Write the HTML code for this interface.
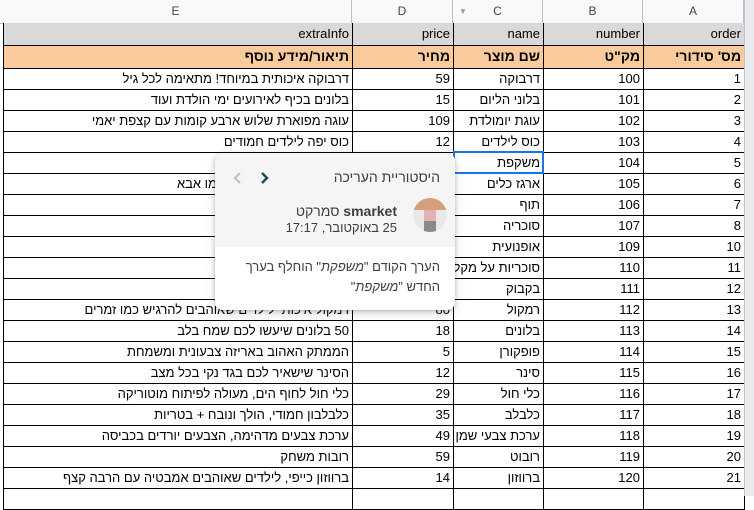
<!DOCTYPE html>
<html><head><meta charset="utf-8"><style>
*{margin:0;padding:0;box-sizing:border-box}
body{width:754px;height:496px;overflow:hidden;background:#fff;font-family:"Liberation Sans",Arial,sans-serif;font-size:13px;color:#000;position:relative}
.hdr{position:absolute;top:0;left:0;width:754px;height:24px;background:#f8f9fa;border-bottom:1px solid #c0c0c0}
.hdr div{position:absolute;top:0;height:23px;line-height:23px;text-align:center;color:#444;font-size:12px;border-right:1px solid #c0c0c0}
.strip{position:absolute;top:0;left:744px;width:10px;height:496px;background:#e8eaed;border-left:1px solid #c0c0c0}
table{position:absolute;top:23px;left:3px;border-collapse:collapse;table-layout:fixed;width:741px;direction:rtl}
td{border:1px solid #000;height:21px;padding:0 3px;white-space:nowrap;overflow:hidden;text-align:right;line-height:19px;font-size:13px}
tr.r1 td{background:#d9d9d9;height:22px;border-top:none}
tr.r2 td{background:#f9cb9c;height:23px;font-weight:bold;font-size:14px}
.sel{position:absolute;left:453px;top:151px;width:91px;height:23px;border:2px solid #1a73e8}
.pop{position:absolute;left:215px;top:153px;width:240px;height:157px;background:#fff;border-radius:8px;box-shadow:0 1px 4px rgba(60,64,67,.3),0 4px 10px rgba(60,64,67,.15);overflow:hidden;direction:rtl}
.pop .top{position:absolute;top:0;left:0;width:240px;height:94px;background:#f5f5f5}
.pop .t{position:absolute;right:15px;top:16px;font-size:14px;color:#3c4043}
.pop .nm{position:absolute;right:58px;top:50px;font-size:14px;color:#3c4043}
.pop .dt{position:absolute;right:58px;top:67px;font-size:13px;color:#3c4043}
.pop .msg{position:absolute;right:15px;top:104px;width:215px;font-size:13px;color:#3c4043;line-height:20px}
</style></head><body>
<div class="hdr">
<div style="left:0;width:352px">E</div>
<div style="left:352px;width:101px">D</div>
<div style="left:453px;width:90px">C<span style="position:absolute;left:6px;top:0;color:#999;font-size:8px">▼</span></div>
<div style="left:543px;width:100px">B</div>
<div style="left:643px;width:101px">A</div>
</div>
<table>
<colgroup><col style="width:101px"><col style="width:100px"><col style="width:90px"><col style="width:101px"><col style="width:349px"></colgroup>
<tr class="r1"><td>order</td><td>number</td><td>name</td><td>price</td><td>extraInfo</td></tr>
<tr class="r2"><td>מס' סידורי</td><td>מק"ט</td><td>שם מוצר</td><td>מחיר</td><td>תיאור/מידע נוסף</td></tr>
<tr><td>1</td><td>100</td><td>דרבוקה</td><td>59</td><td>דרבוקה איכותית במיוחד! מתאימה לכל גיל</td></tr>
<tr><td>2</td><td>101</td><td>בלוני הליום</td><td>15</td><td>בלונים בכיף לאירועים ימי הולדת ועוד</td></tr>
<tr><td>3</td><td>102</td><td>עוגת יומולדת</td><td>109</td><td>עוגה מפוארת שלוש ארבע קומות עם קצפת יאמי</td></tr>
<tr><td>4</td><td>103</td><td>כוס לילדים</td><td>12</td><td>כוס יפה לילדים חמודים</td></tr>
<tr><td>5</td><td>104</td><td>משקפת</td><td></td><td></td></tr>
<tr><td>6</td><td>105</td><td>ארגז כלים</td><td></td><td>ארגז כלים לבנות בדיוק כמו אבא</td></tr>
<tr><td>7</td><td>106</td><td>תוף</td><td></td><td>תוף לילדים מוזיקליים</td></tr>
<tr><td>8</td><td>107</td><td>סוכריה</td><td></td><td></td></tr>
<tr><td>10</td><td>109</td><td>אופנועית</td><td></td><td></td></tr>
<tr><td>11</td><td>110</td><td>סוכריות על מקל</td><td></td><td></td></tr>
<tr><td>12</td><td>111</td><td>בקבוק</td><td></td><td></td></tr>
<tr><td>13</td><td>112</td><td>רמקול</td><td>80</td><td>רמקול איכותי לילדים שאוהבים להרגיש כמו זמרים</td></tr>
<tr><td>14</td><td>113</td><td>בלונים</td><td>18</td><td>50 בלונים שיעשו לכם שמח בלב</td></tr>
<tr><td>15</td><td>114</td><td>פופקורן</td><td>5</td><td>הממתק האהוב באריזה צבעונית ומשמחת</td></tr>
<tr><td>16</td><td>115</td><td>סינר</td><td>12</td><td>הסינר שישאיר לכם בגד נקי בכל מצב</td></tr>
<tr><td>17</td><td>116</td><td>כלי חול</td><td>29</td><td>כלי חול לחוף הים, מעולה לפיתוח מוטוריקה</td></tr>
<tr><td>18</td><td>117</td><td>כלבלב</td><td>35</td><td>כלבלבון חמודי, הולך ונובח + בטריות</td></tr>
<tr><td>19</td><td>118</td><td>ערכת צבעי שמן</td><td>49</td><td>ערכת צבעים מדהימה, הצבעים יורדים בכביסה</td></tr>
<tr><td>20</td><td>119</td><td>רובוט</td><td>59</td><td>רובות משחק</td></tr>
<tr><td>21</td><td>120</td><td>ברווזון</td><td>14</td><td>ברווזון כייפי, לילדים שאוהבים אמבטיה עם הרבה קצף</td></tr>
<tr><td></td><td></td><td></td><td></td><td></td></tr>
</table>
<div class="strip"></div>
<div class="sel"></div>
<div class="pop">
<div class="top"></div>
<div class="t">היסטוריית העריכה</div>
<svg style="position:absolute;left:16px;top:17px" width="40" height="16" viewBox="0 0 40 16"><path d="M9 3 L4 8 L9 13" fill="none" stroke="#bdc1c6" stroke-width="2"/><path d="M31 3 L36 8 L31 13" fill="none" stroke="#1e4f5a" stroke-width="2.5"/></svg>
<svg style="position:absolute;left:198px;top:45px" width="34" height="34" viewBox="0 0 34 34"><defs><clipPath id="c"><circle cx="17" cy="17" r="17"/></clipPath></defs><g clip-path="url(#c)"><rect width="34" height="34" fill="#e8e8e8"/><rect width="34" height="12" fill="#d4a07c"/><rect x="11" y="12" width="12" height="11" fill="#e3b3b3"/><rect x="11" y="23" width="12" height="11" fill="#8a8a8a"/></g></svg>
<div class="nm"><b style="font-weight:bold">smarket</b> סמרקט</div>
<div class="dt">25 באוקטובר, 17:17</div>
<div class="msg">הערך הקודם "<i>משפקת</i>" הוחלף בערך החדש "<i>משקפת</i>"</div>
</div>
</body></html>
